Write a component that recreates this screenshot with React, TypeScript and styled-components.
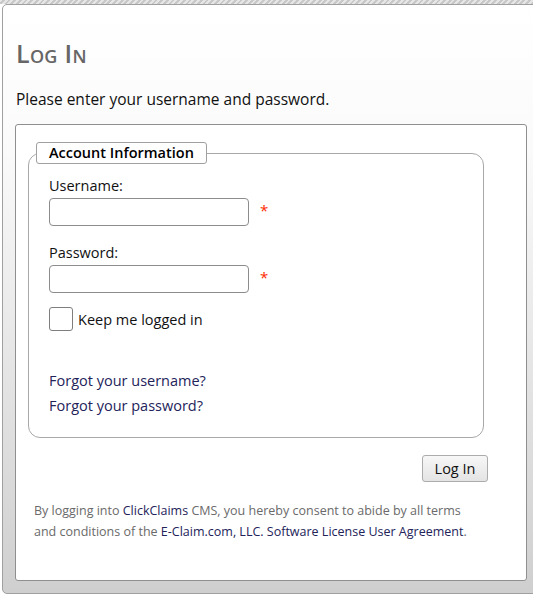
import React from "react";
import styled, { createGlobalStyle } from "styled-components";

const Global = createGlobalStyle`
  html, body { margin: 0; padding: 0; }
  body {
    width: 533px;
    height: 597px;
    overflow: hidden;
    background: #ffffff;
    font-family: "Open Sans", "Noto Sans", sans-serif;
  }
`;

const Page = styled.div`
  width: 533px;
  height: 597px;
  display: flex;
  flex-direction: column;
  background: #ffffff;
`;

const Hatch = styled.div`
  height: 4px;
  flex: none;
  background: repeating-linear-gradient(
    -45deg,
    #c8c8c8 0px,
    #c8c8c8 2px,
    #e6e6e6 2px,
    #e6e6e6 4px
  );
`;

const Outer = styled.div`
  margin-left: 2px;
  margin-right: -10px;
  height: 590px;
  box-sizing: border-box;
  border: 1px solid #a0a0a0;
  border-radius: 5px;
  background: linear-gradient(to bottom, #ffffff 0%, #fafafa 25%, #e6e6e6 60%, #cfcfcf 100%);
  padding: 0 0 0 12px;
  display: flex;
  flex-direction: column;
`;

const Title = styled.h1`
  margin: 32px 0 0 1px;
  font-size: 25px;
  line-height: 32px;
  font-weight: 600;
  font-variant: small-caps;
  color: #666666;
  letter-spacing: 0.3px;
`;

const Intro = styled.p`
  margin: 20px 0 0 1px;
  font-size: 15.5px;
  line-height: 20px;
  color: #111111;
`;

const Card = styled.div`
  margin-top: 15px;
  width: 512px;
  height: 457px;
  box-sizing: border-box;
  border: 1px solid #8f8f8f;
  border-radius: 3px;
  background: #ffffff;
  padding: 17px 0 0 12px;
  display: flex;
  flex-direction: column;
`;

const Fieldset = styled.fieldset`
  margin: 0;
  width: 456px;
  height: 296px;
  box-sizing: border-box;
  border: 1px solid #a8a8a8;
  border-radius: 12px;
  padding: 0 0 0 20px;
  display: flex;
  flex-direction: column;
`;

const Legend = styled.legend`
  margin-left: -13px;
  padding: 0 12px;
  height: 20px;
  border: 1px solid #a0a0a0;
  border-radius: 3px;
  font-size: 14.5px;
  line-height: 20px;
  font-weight: 600;
  color: #000000;
  background: #ffffff;
`;

const Label = styled.label<{ $top: number }>`
  display: block;
  margin-top: ${(p) => p.$top}px;
  font-size: 14.5px;
  line-height: 18px;
  color: #111111;
`;

const FieldRow = styled.div`
  margin-top: 3px;
  display: flex;
  align-items: center;
  gap: 11px;
`;

const Input = styled.input`
  width: 200px;
  height: 28px;
  box-sizing: border-box;
  border: 1px solid #8c8c8c;
  border-radius: 4px;
  background: #ffffff;
  margin: 0;
  padding: 0 4px;
`;

const Required = styled.span`
  color: #ff2a00;
  font-size: 15px;
  line-height: 15px;
  margin-top: -4px;
`;

const CheckRow = styled.label`
  margin-top: 14px;
  display: flex;
  align-items: center;
  gap: 5px;
  font-size: 14.5px;
  color: #111111;
`;

const Box = styled.span`
  width: 24px;
  height: 24px;
  box-sizing: border-box;
  border: 1px solid #7e7e7e;
  border-radius: 3px;
  background: #ffffff;
  display: inline-block;
`;

const Links = styled.div`
  margin-top: 40px;
  display: flex;
  flex-direction: column;
  gap: 5px;
`;

const Link = styled.a`
  font-size: 14.5px;
  line-height: 20px;
  color: #23235a;
  text-decoration: none;
`;

const ButtonRow = styled.div`
  width: 460px;
  margin-top: 17px;
  display: flex;
  justify-content: flex-end;
`;

const Button = styled.button`
  width: 66px;
  height: 27px;
  box-sizing: border-box;
  border: 1px solid #acacac;
  border-radius: 3px;
  background: linear-gradient(to bottom, #f7f7f7, #e4e4e4);
  font-family: "Open Sans", "Noto Sans", sans-serif;
  font-size: 14.5px;
  color: #111111;
  padding: 0;
`;

const Legal = styled.p`
  margin: 18px 0 0 6px;
  font-size: 12.5px;
  line-height: 21px;
  color: #6a6a6a;
  width: 440px;
`;

const LegalLink = styled.a`
  color: #23235a;
  text-decoration: none;
`;

export default function App() {
  return (
    <>
      <Global />
      <Page>
        <Hatch />
        <Outer>
          <Title>Log In</Title>
          <Intro>Please enter your username and password.</Intro>
          <Card>
            <Fieldset>
              <Legend>Account Information</Legend>
              <Label $top={13}>Username:</Label>
              <FieldRow>
                <Input type="text" />
                <Required>*</Required>
              </FieldRow>
              <Label $top={18}>Password:</Label>
              <FieldRow>
                <Input type="password" />
                <Required>*</Required>
              </FieldRow>
              <CheckRow>
                <Box />
                Keep me logged in
              </CheckRow>
              <Links>
                <Link href="#">Forgot your username?</Link>
                <Link href="#">Forgot your password?</Link>
              </Links>
            </Fieldset>
            <ButtonRow>
              <Button>Log In</Button>
            </ButtonRow>
            <Legal>
              By logging into <LegalLink href="#">ClickClaims</LegalLink> CMS, you hereby consent to abide by all terms
              and conditions of the <LegalLink href="#">E-Claim.com, LLC. Software License User Agreement</LegalLink>.
            </Legal>
          </Card>
        </Outer>
      </Page>
    </>
  );
}
